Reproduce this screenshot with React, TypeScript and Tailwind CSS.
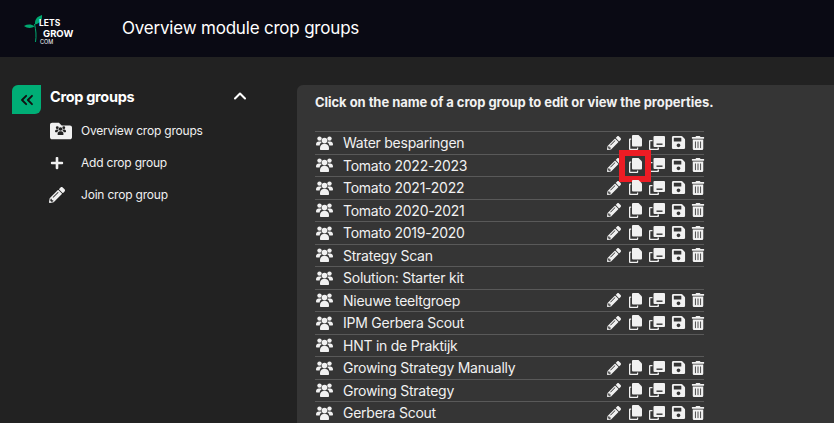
import { FaPencilAlt, FaSave, FaTrashAlt, FaPlus, FaFolder } from 'react-icons/fa';
import { ChevronsLeft, ChevronUp } from 'lucide-react';

const groups = [
  { name: 'Water besparingen', actions: true },
  { name: 'Tomato 2022-2023', actions: true, marked: true },
  { name: 'Tomato 2021-2022', actions: true },
  { name: 'Tomato 2020-2021', actions: true },
  { name: 'Tomato 2019-2020', actions: true },
  { name: 'Strategy Scan', actions: true },
  { name: 'Solution: Starter kit', actions: false },
  { name: 'Nieuwe teeltgroep', actions: true },
  { name: 'IPM Gerbera Scout', actions: true },
  { name: 'HNT in de Praktijk', actions: false },
  { name: 'Growing Strategy Manually', actions: true },
  { name: 'Growing Strategy', actions: true },
  { name: 'Gerbera Scout', actions: true },
];

function Logo() {
  return (
    <div className="relative w-[56px] h-[36px] text-white font-bold">
      <svg viewBox="0 0 20 32" className="absolute left-0 top-0 w-[20px] h-[32px]">
        <path d="M11 13.5c-.5-5 2-8 7-9.500 .5 5-2 8.500-7 9.500z" fill="#00a870" />
        <path d="M10.500 15.500c-3-2.500-7-2.500-10.500-.5 3 2.500 7.500 2.500 10.500 .5z" fill="#00a870" />
        <path d="M10.500 13c1.500 6 2 12 1 18" fill="none" stroke="#00a870" strokeWidth="1" />
      </svg>
      <div className="absolute left-[15px] top-[8.250px] text-[8.5px] leading-none">LETS</div>
      <div className="absolute left-[19px] top-[18.750px] text-[9.5px] leading-none">GROW</div>
      <div className="absolute left-[16px] top-[29.750px] text-[5.5px] leading-none font-normal">COM</div>
    </div>
  );
}

function Users({ fill = '#f1f1f1' }: { fill?: string }) {
  return (
    <svg viewBox="0 0 17 14" className="w-[17px] h-[14px]" fill={fill}>
      <circle cx="3.500" cy="2.600" r="2.200" />
      <circle cx="13.500" cy="2.600" r="2.200" />
      <path d="M0 8.500c0-1.800 1.200-3 2.800-3h1.700c.6 0 1 .2 1.400 .5-1.300 .8-2.100 2-2.300 3.500H1c-.6 0-1-.4-1-1z" />
      <path d="M17 8.500c0-1.800-1.200-3-2.800-3h-1.700c-.6 0-1 .2-1.400 .5 1.300 .8 2.100 2 2.300 3.500H16c.6 0 1-.4 1-1z" />
      <circle cx="8.500" cy="4.600" r="2.800" />
      <path d="M4 12c0-2.300 1.500-4 3.500-4h2c2 0 3.500 1.700 3.500 4v1c0 .6-.4 1-1 1H5c-.6 0-1-.4-1-1z" />
    </svg>
  );
}

function CopyIcon() {
  return (
    <svg viewBox="0 0 13 15" className="w-[13px] h-[15px]" fill="#f1f1f1">
      <path d="M4 0h5.500L13 3.500V10.500a1 1 0 0 1-1 1H4a1 1 0 0 1-1-1V1a1 1 0 0 1 1-1z" />
      <path d="M1 3.500h1.200v1.200H1.300V13.700H8V12.500h1.200V14a1 1 0 0 1-1 1H1a1 1 0 0 1-1-1V4.500a1 1 0 0 1 1-1z" />
    </svg>
  );
}

function CloneMinus() {
  return (
    <svg viewBox="0 0 16 14" className="w-[16px] h-[14px]" fill="#f1f1f1">
      <path d="M1 4h2.500v1.200H1.300V12.700H8.500V11.500H10V13a1 1 0 0 1-1 1H1a1 1 0 0 1-1-1V5a1 1 0 0 1 1-1z" />
      <path d="M5.500 0h9.500a1 1 0 0 1 1 1v9a1 1 0 0 1-1 1H5.500a1 1 0 0 1-1-1V1a1 1 0 0 1 1-1z" />
      <rect x="7.500" y="7.500" width="6" height="1.400" fill="#353535" />
    </svg>
  );
}

function Actions({ marked }: { marked?: boolean }) {
  return (
    <div className="flex items-center text-[#f1f1f1] text-[14px] -mr-[4px]">
      <span className="w-[21px] flex justify-center"><FaPencilAlt /></span>
      <span className="relative w-[22px] flex justify-center">
        <CopyIcon />
        {marked && <span className="absolute left-[-5px] top-[-8px] w-[32px] h-[32px] border-[6px] border-[#ed1c24]" />}
      </span>
      <span className="w-[22px] flex justify-center"><CloneMinus /></span>
      <span className="w-[20px] flex justify-center"><FaSave className="text-[15px]" /></span>
      <span className="w-[20px] flex justify-center"><FaTrashAlt /></span>
    </div>
  );
}

export default function App() {
  return (
    <div className="w-[834px] h-[423px] overflow-hidden bg-[#222222] text-[#f1f1f1] font-['Inter','Liberation_Sans',sans-serif]">
      <header className="h-[57px] bg-[#0a0a14] flex items-center pl-[24px]">
        <Logo />
        <h1 className="ml-[42px] text-[17px] tracking-[-0.2px] text-white">Overview module crop groups</h1>
      </header>

      <div className="flex pt-[28px]">
        <aside className="w-[297px] shrink-0 pl-[12px]">
          <div className="flex items-center h-[29px]">
            <div className="w-[29px] h-[29px] bg-[#00ae76] rounded-tl-[6px] rounded-br-[6px] flex items-center justify-center text-[#111]">
              <ChevronsLeft size={20} strokeWidth={2.25} />
            </div>
            <span className="ml-[9px] mb-[6px] text-[14.5px] font-bold tracking-[-0.3px] text-white">Crop groups</span>
            <ChevronUp size={20} strokeWidth={2.5} className="ml-[96px] mb-[8px] text-white" />
          </div>
          <nav className="mt-[1px] pl-[37px] text-[12px] tracking-[-0.2px]">
            <div className="flex items-center h-[32px]">
              <span className="relative w-[23px] flex justify-center">
                <FaFolder className="text-[22px] text-[#f1f1f1]" />
                <span className="absolute left-[6px] top-[6px] scale-[0.65] origin-top-left"><Users fill="#222222" /></span>
              </span>
              <span className="ml-[9px]">Overview crop groups</span>
            </div>
            <div className="flex items-center h-[32px]">
              <span className="w-[16px] flex justify-center"><FaPlus className="text-[14px]" /></span>
              <span className="ml-[16px]">Add crop group</span>
            </div>
            <div className="flex items-center h-[32px]">
              <span className="w-[16px] flex justify-center"><FaPencilAlt className="text-[16px]" /></span>
              <span className="ml-[16px]">Join crop group</span>
            </div>
          </nav>
        </aside>

        <main className="flex-1 h-[400px] bg-[#353535] rounded-tl-[6px] pl-[18px] pt-[8px]">
          <p className="text-[13px] font-bold tracking-[-0.05px] h-[38px] whitespace-nowrap">Click on the name of a crop group to edit or view the properties.</p>
          <ul className="w-[389px]">
            {groups.map(g => (
              <li key={g.name} className="flex items-center h-[22.5px] border-t border-[#595959] pl-[1px]">
                <Users />
                <span className="ml-[10px] text-[14px] tracking-[-0.25px] flex-1">{g.name}</span>
                {g.actions && <Actions marked={g.marked} />}
              </li>
            ))}
          </ul>
        </main>
      </div>
    </div>
  );
}
